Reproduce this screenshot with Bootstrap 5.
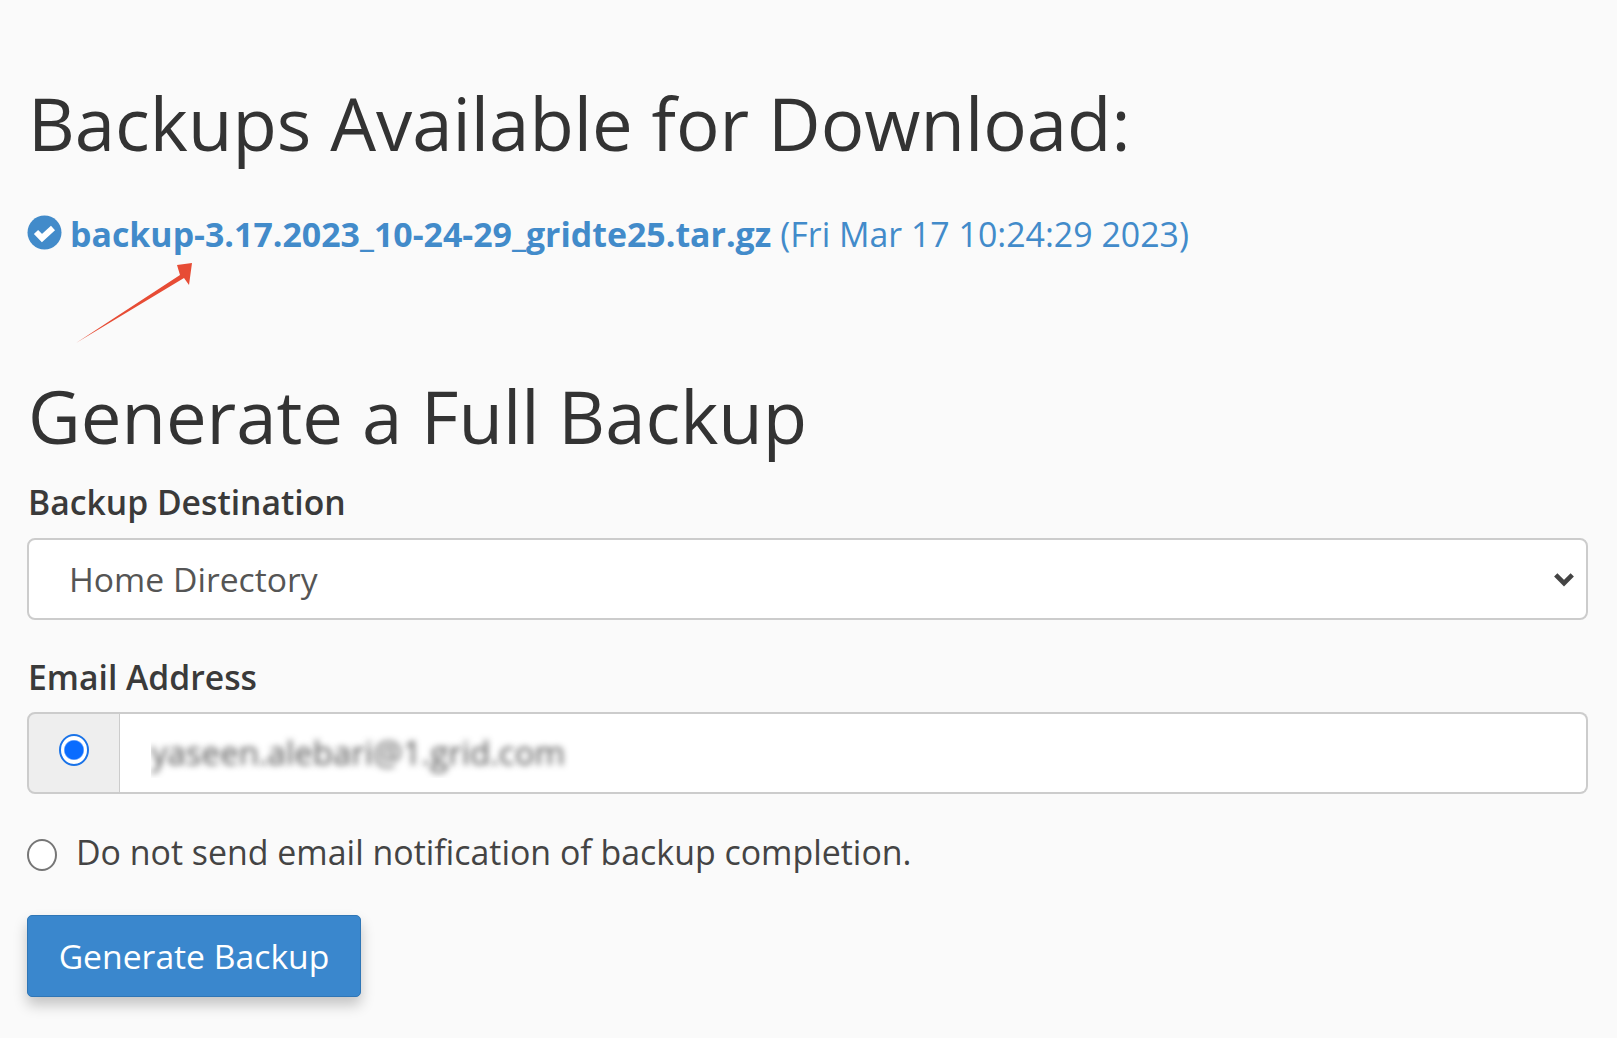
<!DOCTYPE html>
<html lang="en">
<head>
    <meta charset="UTF-8">
    <meta name="viewport" content="width=device-width, initial-scale=1.0">
    <title>Backups</title>
    <link href="https://cdn.jsdelivr.net/npm/bootstrap@5.3.3/dist/css/bootstrap.min.css" rel="stylesheet">
    <style>
        body { background-color: #fafafa; color: #333; font-family: "Open Sans", "Noto Sans", sans-serif; font-size: 33.9px; }
        .page-wrap { padding: 84px 29px 0 27px; position: relative; height: 1038px; overflow: hidden; }
        .page-title { font-size: 72.5px; font-weight: 400; line-height: 78px; margin: 0 0 0 1px; color: #333; }
        .backup-row { display: flex; align-items: center; margin-top: 47px; height: 50px; color: #428bca; white-space: nowrap; }
        .backup-row svg { flex: none; margin-right: 8px; margin-top: -3px; }
        .backup-link { font-weight: 700; color: #428bca; text-decoration: none; margin-right: 9px; }
        .generate-title { margin-top: 118px; }
        .field-label { display: block; font-weight: 600; font-size: 33.7px; line-height: 44px; margin: 25px 0 14px 1px; color: #3a3a3a; }
        .dest-select.form-select { height: 82px; font-size: 33.7px; color: #555; background-color: #fff; padding-left: 40px; border: 2px solid #ccc; border-radius: 8px; background-image: url("data:image/svg+xml,%3csvg xmlns='http://www.w3.org/2000/svg' viewBox='0 0 16 16'%3e%3cpath fill='none' stroke='%23444' stroke-width='3.4' d='M2 5l6 6 6-6'/%3e%3c/svg%3e"); background-size: 26px 22px; background-position: right 9px center; }
        .field-email { margin-top: 35px; margin-bottom: 13px; }
        .email-group .input-group-text { width: 94px; justify-content: center; background: #eee; border: 2px solid #ccc; border-radius: 8px 0 0 8px; padding: 0; align-items: flex-start; padding-top: 20px; }
        .email-group { height: 82px; }
        .email-group .form-control { font-size: 33px; border: 2px solid #ccc; border-left: 0; border-radius: 0 8px 8px 0; padding-left: 31px; color: transparent; text-shadow: 0 0 6px #555; }
        .blue-radio { appearance: none; width: 30px; height: 32px; border-radius: 50%; border: 2px solid #1a73e8; background: radial-gradient(circle, #0a6cff 0 9px, #fff 10.5px); margin: 0; }
        .plain-radio { appearance: none; flex: none; width: 30px; height: 32px; border-radius: 50%; border: 2px solid #767676; background: #fff; margin: 6px 18px 0 0; }
        .notify-row { display: flex; align-items: center; margin-top: 33px; height: 50px; color: #444; }
        .notify-row span { margin-left: 1px; }
        .gen-btn.btn { margin-top: 38px; width: 334px; height: 82px; font-size: 33.7px; color: #fff; background: #3a87cd; border: 1px solid #2f76b6; border-radius: 5px; padding: 0; box-shadow: 0 8px 14px rgba(0,0,0,.22); }
        .arrow-note { position: absolute; left: 68px; top: 255px; }
    </style>
</head>
<body>
    <div class="page-wrap">
        <h1 class="page-title">Backups Available for Download:</h1>
        <div class="backup-row">
            <svg width="35" height="35" viewBox="0 0 35 35">
                <circle cx="17.5" cy="17.5" r="17" fill="#428bca"/>
                <path d="M9 17l6 6 11-10" fill="none" stroke="#fff" stroke-width="6"/>
            </svg>
            <a class="backup-link" href="#">backup-3.17.2023_10-24-29_gridte25.tar.gz</a>
            <span>(Fri Mar 17 10:24:29 2023)</span>
        </div>
        <svg class="arrow-note" width="130" height="95" viewBox="0 0 130 95">
            <path d="M8 88L112 20 109 10 124 8 121 30 116 23Z" fill="#e74c35"/>
        </svg>

        <h1 class="page-title generate-title">Generate a Full Backup</h1>
        <label class="field-label">Backup Destination</label>
        <select class="form-select dest-select">
            <option>Home Directory</option>
        </select>

        <label class="field-label field-email">Email Address</label>
        <div class="input-group email-group">
            <span class="input-group-text"><input class="blue-radio" type="radio" checked></span>
            <input type="text" class="form-control" value="yaseen.alebari@1.grid.com">
        </div>

        <div class="notify-row">
            <input class="plain-radio" type="radio">
            <span>Do not send email notification of backup completion.</span>
        </div>
        <button class="btn gen-btn">Generate Backup</button>
    </div>
</body>
</html>
